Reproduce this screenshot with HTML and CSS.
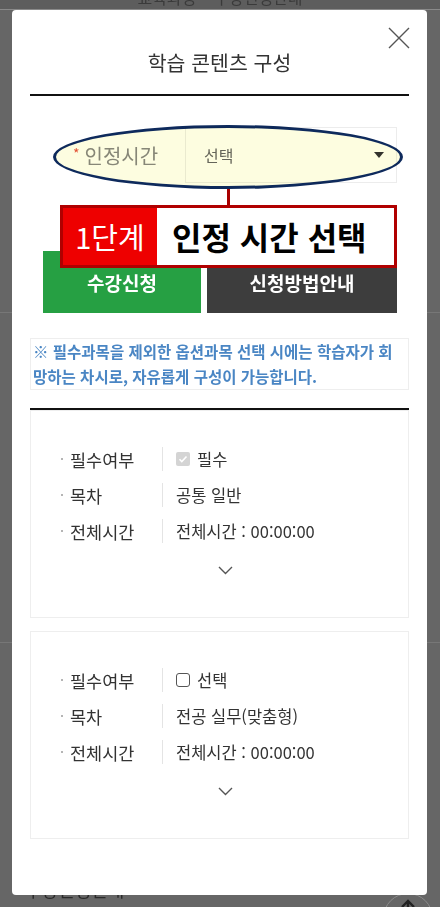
FILE: index.html
```html
<!DOCTYPE html>
<html lang="ko">
<head>
<meta charset="utf-8">
<title>학습 콘텐츠 구성</title>
<link rel="stylesheet" href="styles.css">
</head>
<body>
<div class="page">
  <header class="page-head"><span class="page-head-text">교육과정 &nbsp;&nbsp; 수강신청안내</span></header>
  <section class="page-sec sec1"></section>
  <section class="page-sec sec2"></section>
  <section class="page-sec sec3"><p class="page-text">수강신청안내</p></section>
</div>
<button class="to-top" aria-label="맨 위로">
  <svg width="18" height="18" viewBox="0 0 18 18"><path d="M9 16V3M3 9l6-6 6 6" fill="none" stroke="#222" stroke-width="2.4"/></svg>
</button>

<div class="modal">
  <button class="modal-close" aria-label="닫기">
    <svg width="22" height="22" viewBox="0 0 22 22"><path d="M1 1L21 21M21 1L1 21" fill="none" stroke="#555" stroke-width="1.4"/></svg>
  </button>
  <h2 class="modal-title">학습 콘텐츠 구성</h2>

  <div class="apply">
    <div class="field">
      <div class="field-label"><span class="req">*</span>인정시간</div>
      <div class="field-select"><span>선택</span><i class="caret"></i></div>
    </div>
    <div class="btns">
      <a class="btn btn-green">수강신청</a>
      <a class="btn btn-dark">신청방법안내</a>
    </div>
    <div class="anno-ellipse"></div>
    <div class="anno-stem"></div>
    <div class="anno-callout"><span class="anno-step">1단계</span><span class="anno-text">인정 시간 선택</span></div>
  </div>

  <p class="notice">※ 필수과목을 제외한 옵션과목 선택 시에는 학습자가 회망하는 차시로, 자유롭게 구성이 가능합니다.</p>

  <div class="cards">
    <div class="card">
      <ul class="info">
        <li><span class="k">필수여부</span><span class="v"><span class="chk chk-on"><svg width="10" height="10" viewBox="0 0 10 10"><path d="M1.5 5.2l2.3 2.3L8.5 2.5" fill="none" stroke="#fff" stroke-width="1.6"/></svg></span>필수</span></li>
        <li><span class="k">목차</span><span class="v">공통 일반</span></li>
        <li><span class="k">전체시간</span><span class="v">전체시간 : 00:00:00</span></li>
      </ul>
      <div class="toggle"><svg width="15" height="9" viewBox="0 0 15 9"><path d="M1 1l6.5 6.5L14 1" fill="none" stroke="#555" stroke-width="1.4"/></svg></div>
    </div>
    <div class="card">
      <ul class="info">
        <li><span class="k">필수여부</span><span class="v"><span class="chk chk-off"></span>선택</span></li>
        <li><span class="k">목차</span><span class="v">전공 실무(맞춤형)</span></li>
        <li><span class="k">전체시간</span><span class="v">전체시간 : 00:00:00</span></li>
      </ul>
      <div class="toggle"><svg width="15" height="9" viewBox="0 0 15 9"><path d="M1 1l6.5 6.5L14 1" fill="none" stroke="#555" stroke-width="1.4"/></svg></div>
    </div>
  </div>
</div>
</body>
</html>
```

FILE: styles.css
```css
* { box-sizing: border-box; }
html, body {
  margin: 0;
  padding: 0;
  height: 907px;
  overflow: hidden;
}
body {
  background: #666;
  font-family: "Noto Sans CJK KR", "Noto Sans", sans-serif;
  color: #333;
  position: relative;
}

/* dimmed page behind the modal */
.page-head {
  height: 10px;
  background: #5d5d5d;
  border-bottom: 1px solid #8a8a8a;
  overflow: hidden;
  text-align: center;
}
.page-head-text {
  display: block;
  margin-top: -12px;
  font-size: 16px;
  line-height: 18px;
  color: #3a3a3a;
}
.page-sec { border-bottom: 1px solid #777; }
.sec1 { height: 303px; }
.sec2 { height: 330px; }
.sec3 { border-bottom: 0; }
.page-text {
  margin: 0;
  padding: 233px 0 0 25px;
  font-size: 18px;
  color: #2a2a2a;
}
.to-top {
  position: absolute;
  left: 383px;
  top: 893px;
  width: 50px;
  height: 50px;
  border-radius: 50%;
  border: 1px solid #8c8c8c;
  background: #666;
  padding: 0;
  display: flex;
  justify-content: center;
  align-items: flex-start;
  padding-top: 4px;
}

/* modal */
.modal {
  position: absolute;
  left: 12px;
  top: 10px;
  width: 415px;
  height: 885px;
  background: #fff;
  border-radius: 4px;
  padding: 0 18px;
}
.modal-close {
  position: absolute;
  right: 17px;
  top: 17px;
  width: 22px;
  height: 22px;
  border: 0;
  padding: 0;
  background: none;
}
.modal-title {
  margin: 0;
  padding: 39px 0 19px;
  font-size: 20.5px;
  line-height: 26px;
  font-weight: 400;
  color: #333;
  text-align: center;
  border-bottom: 2px solid #111;
}

.apply {
  position: relative;
  margin: 31px 12px 0 13px;
}
.field {
  display: flex;
  height: 56px;
}
.field-label {
  width: 142px;
  padding-left: 30px;
  display: flex;
  align-items: center;
  font-size: 20px;
  color: #888;
}
.req {
  color: #e5533d;
  font-size: 14px;
  margin-right: 5px;
  transform: translateY(-2px);
}
.field-select {
  flex: 1;
  border: 1px solid #ececec;
  padding: 0 12px 0 18px;
  display: flex;
  align-items: center;
  justify-content: space-between;
  font-size: 16px;
  color: #666;
}
.caret {
  width: 0;
  height: 0;
  border-left: 5px solid transparent;
  border-right: 5px solid transparent;
  border-top: 6px solid #333;
}
.btns {
  margin-top: 68px;
  display: grid;
  grid-template-columns: 158px 190px;
  gap: 6px;
}
.btn {
  height: 62px;
  display: flex;
  align-items: center;
  justify-content: center;
  color: #fff;
  font-size: 19px;
  font-weight: 700;
}
.btn-green { background: #26a043; }
.btn-dark { background: #3d3d3d; }

/* annotation overlay */
.anno-ellipse {
  position: absolute;
  left: 10px;
  top: -2px;
  width: 350px;
  height: 64px;
  border: 3px solid #0e2a5c;
  border-radius: 50%;
  background: #fdfde0;
  mix-blend-mode: multiply;
}
.anno-stem {
  position: absolute;
  left: 184px;
  top: 62px;
  width: 3px;
  height: 17px;
  background: #a80000;
}
.anno-callout {
  position: absolute;
  left: 17px;
  top: 78px;
  width: 337px;
  height: 63px;
  border: 3px solid #b00000;
  display: flex;
  background: #fff;
}
.anno-step {
  width: 94px;
  background: #ee0000;
  color: #fff;
  font-size: 29px;
  display: flex;
  align-items: center;
  justify-content: center;
  padding-bottom: 2px;
}
.anno-text {
  flex: 1;
  padding-left: 15px;
  display: flex;
  align-items: center;
  font-size: 32px;
  font-weight: 700;
  color: #000;
  padding-bottom: 2px;
  white-space: nowrap;
}

.notice {
  margin: 25px 0 0;
  border: 1px solid #eee;
  padding: 0 2px;
  font-size: 15.5px;
  line-height: 25px;
  font-weight: 700;
  color: #4a86c4;
}

.cards {
  margin-top: 18px;
  border-top: 2px solid #111;
}
.card {
  border: 1px solid #eee;
  padding: 36px 0 42px;
}
.card + .card { margin-top: 13px; }
.info {
  list-style: none;
  margin: 0;
  padding: 0;
  display: flex;
  flex-direction: column;
  gap: 12px;
}
.info li {
  display: flex;
  align-items: center;
  height: 24px;
  padding-left: 30px;
  font-size: 17.5px;
  color: #333;
}
.info li::before {
  content: "";
  width: 2px;
  height: 2px;
  background: #b5b5b5;
  margin-right: 7px;
}
.k { width: 92px; }
.v {
  height: 24px;
  border-left: 1px solid #e4e4e4;
  padding-left: 13px;
  display: flex;
  align-items: center;
  font-size: 16.5px;
}
.chk {
  width: 14px;
  height: 14px;
  margin-right: 7px;
  border-radius: 2px;
  display: flex;
  align-items: center;
  justify-content: center;
}
.chk-on { background: #d4d4d4; }
.chk-off {
  border: 1.3px solid #555;
  border-radius: 3px;
  background: #fff;
}
.toggle {
  margin-top: 23px;
  height: 9px;
  display: flex;
  justify-content: center;
  padding-left: 11px;
}
.toggle svg { display: block; }
```
